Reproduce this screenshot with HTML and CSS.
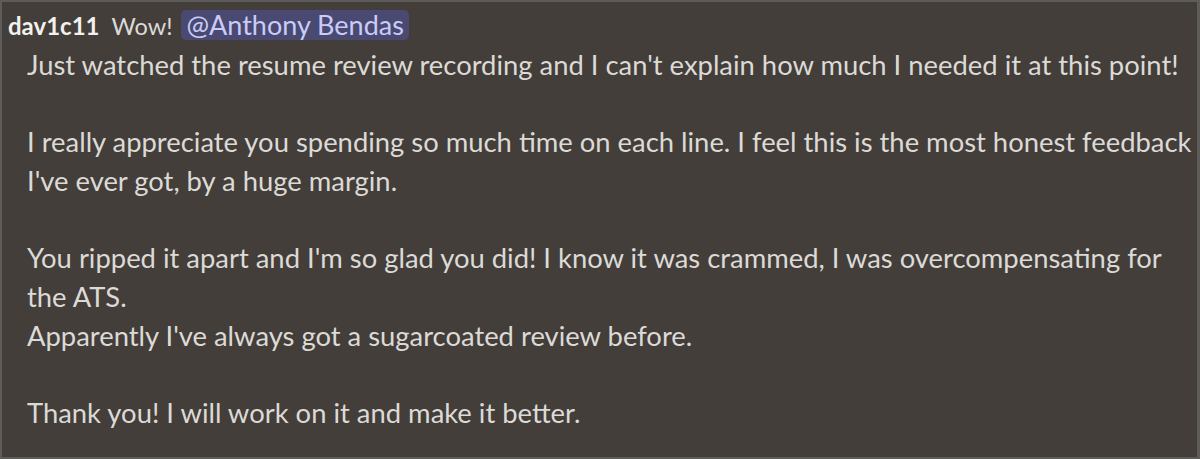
FILE: index.html
```html
<!DOCTYPE html>
<html lang="en">
<head>
    <meta charset="UTF-8">
    <title>Message</title>
    <link rel="stylesheet" href="styles.css">
</head>
<body>
    <div class="message">
        <div class="message-head">
            <span class="author">dav1c11</span>
            <span class="first-line">Wow! <span class="mention">@Anthony Bendas</span></span>
        </div>
        <div class="message-body">
            <p>Just watched the resume review recording and I can't explain how much I needed it at this point!</p>
            <p>I really appreciate you spending so much time on each line. I feel this is the most honest feedback I've ever got, by a huge margin.</p>
            <p>You ripped it apart and I'm so glad you did! I know it was crammed, I was overcompensating for the ATS.<br>Apparently I've always got a sugarcoated review before.</p>
            <p>Thank you! I will work on it and make it better.</p>
        </div>
    </div>
</body>
</html>
```

FILE: styles.css
```css
html, body {
    margin: 0;
    height: 100%;
}

body {
    background: #5e5c59;
    font-family: 'Lato', 'Noto Sans', sans-serif;
    color: #dcdad7;
}

.message {
    box-sizing: border-box;
    margin: 2px 3px 2px 2px;
    height: calc(100% - 4px);
    background: #433e39;
    padding: 5px 0 0 6px;
}

.message-head {
    display: flex;
    align-items: baseline;
    gap: 12px;
    line-height: 38.7px;
}

.author {
    font-size: 24px;
    font-weight: 700;
    color: #f2f1ef;
}

.first-line {
    font-size: 23.5px;
}

.mention {
    display: inline-block;
    font-size: 27px;
    line-height: 30px;
    background: #4a4971;
    color: #c9ccf8;
    border-radius: 5px;
    padding: 0 5px;
    margin-left: 3px;
}

.message-body {
    padding-left: 19px;
    font-size: 27.4px;
    line-height: 38.7px;
}

.message-body p {
    margin: 0 0 38.7px;
}
```
